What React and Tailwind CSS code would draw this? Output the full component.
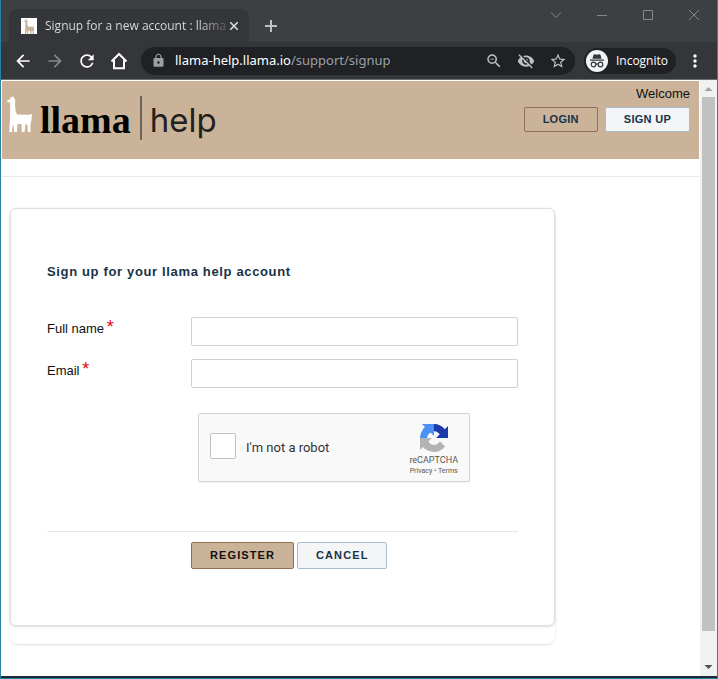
import { useState } from 'react'
import {
    MdArrowBack,
    MdArrowForward,
    MdLock,
    MdMoreVert,
    MdRefresh,
    MdStarBorder,
    MdVisibilityOff,
    MdZoomOut,
} from 'react-icons/md'

const LLAMA_PATH =
    'M3.500 0.500 L5 1.500 L6 0 L7 2 L8.200 4 L8 9 L8.600 15 L10 18.500 L22 18.800 L25 18 L24.500 24 L23.500 28 L23.500 36 L20.700 36 L20.500 29 L18.500 28 L17.500 36 L14.800 36 L14.500 28 L10.500 28 L9.800 36 L7.300 36 L6.500 29.500 L5.500 29.500 L5 36 L2.300 36 L3 24 L3.300 6.500 L0.500 6 L0 4.800 L3.500 3 Z'

const Llama = ({ className }) => (
    <svg viewBox="0 0 25 36" className={className} fill="currentColor" aria-hidden="true">
        <path d={LLAMA_PATH} />
    </svg>
)

const HomeIcon = () => (
    <svg viewBox="0 0 20 20" className="size-5" fill="none" stroke="currentColor" strokeWidth="2" aria-hidden="true">
        <path d="M2.500 10.500 10 3l7.500 7.500M5 9v8.200h10V9" />
    </svg>
)

const IncognitoIcon = () => (
    <svg viewBox="0 0 22 22" className="size-[22px] rounded-full bg-[#f1f3f4] text-[#35363a]" aria-hidden="true">
        <path fill="currentColor" d="M7.500 5c.2-.7.700-1 1.400-.8l2.100.5 2.100-.5c.7-.2 1.200.1 1.400.8l1.100 3.700H6.400zM4 9.500h14v1.200H4z" />
        <g fill="none" stroke="currentColor" strokeWidth="1.200">
            <circle cx="7.500" cy="14.500" r="2.300" />
            <circle cx="14.500" cy="14.500" r="2.300" />
            <path d="M9.800 14.200q1.200-.8 2.400 0" />
        </g>
    </svg>
)

const RecaptchaLogo = () => (
    <svg viewBox="0 0 64 64" className="size-7" aria-hidden="true">
        <path fill="#1c3aa9" d="M64 31.955l-.033-1.37V4.687l-7.16 7.16C50.948 4.674 42.033.093 32.05.093c-10.4 0-19.622 4.96-25.458 12.64l11.736 11.86a15.55 15.55 0 0 1 4.754-5.334c2.05-1.6 4.952-2.906 8.968-2.906.485 0 .86.057 1.135.163 4.976.393 9.288 3.14 11.828 7.124l-8.307 8.307L64 31.953" />
        <path fill="#4a90f5" d="M31.862.094l-1.37.033H4.594l7.16 7.16C4.58 13.147 0 22.06 0 32.046c0 10.4 4.96 19.622 12.64 25.458L24.5 45.768a15.55 15.55 0 0 1-5.334-4.754c-1.6-2.05-2.906-4.952-2.906-8.968 0-.485.057-.86.163-1.135.393-4.976 3.14-9.288 7.124-11.828l8.307 8.307L31.86.095" />
        <path fill="#b3b3b3" d="M.001 32.045l.033 1.37v25.898l7.16-7.16c5.86 7.173 14.774 11.754 24.76 11.754 10.4 0 19.622-4.96 25.458-12.64l-11.736-11.86a15.55 15.55 0 0 1-4.754 5.334c-2.05 1.6-4.952 2.906-8.968 2.906-.485 0-.86-.057-1.135-.163-4.976-.393-9.288-3.14-11.828-7.124l8.307-8.307c-10.522.04-22.4.066-27.295-.005" />
    </svg>
)

const WindowButton = ({ label, d }) => (
    <button type="button" aria-label={label} className="flex h-[30px] w-[46px] items-center justify-center">
        <svg viewBox="0 0 12 12" className="size-3" fill="none" stroke="#85888b">
            <path d={d} />
        </svg>
    </button>
)

const TabStrip = () => (
    <div className="flex h-[42px] items-start bg-[#3c4043]">
        <div className="mt-[9px] ml-2 flex h-[33px] w-[240px] items-center rounded-t-lg bg-[#35363a] pr-2 pl-3">
            <span className="flex size-4 shrink-0 items-end justify-center bg-white">
                <Llama className="h-[15px] text-[#cbb39a]" />
            </span>
            <span className="ml-2 flex-1 bg-linear-to-r from-[#dfe1e5] from-85% to-[#55565a] bg-clip-text font-[Open_Sans,sans-serif] text-xs whitespace-nowrap text-transparent">
                Signup for a new account : llama
            </span>
            <button type="button" aria-label="Close tab" className="flex size-4 items-center justify-center">
                <svg viewBox="0 0 8 8" className="size-2" stroke="#dfe1e5" strokeWidth="1.500">
                    <path d="M0 0l8 8M8 0L0 8" />
                </svg>
            </button>
        </div>
        <button type="button" aria-label="New tab" className="mt-[10px] ml-[6px] flex size-8 items-center justify-center">
            <svg viewBox="0 0 12 12" className="size-3" stroke="#bdc1c6" strokeWidth="2">
                <path d="M6 0v12M0 6h12" />
            </svg>
        </button>
        <div className="ml-auto flex">
            <WindowButton label="Search tabs" d="M1 3.500l5 5 5-5" />
            <WindowButton label="Minimize" d="M1 6.500h10" />
            <WindowButton label="Maximize" d="M1.500 1.500h9v9h-9z" />
            <WindowButton label="Close" d="M1 1l10 10M11 1L1 11" />
        </div>
    </div>
)

const Toolbar = () => (
    <div className="flex h-[38px] items-center border-b border-[#6b6c6f] bg-[#35363a] px-3 text-white">
        <div className="flex gap-3">
            <button type="button" aria-label="Back"><MdArrowBack className="size-5" /></button>
            <button type="button" aria-label="Forward" className="text-[#85878a]"><MdArrowForward className="size-5" /></button>
            <button type="button" aria-label="Reload"><MdRefresh className="size-5" /></button>
            <button type="button" aria-label="Home"><HomeIcon /></button>
        </div>
        <div className="ml-3 flex h-7 flex-1 items-center rounded-full bg-[#202124] pr-2 pl-[10px]">
            <MdLock className="size-[15px] text-[#9aa0a6]" />
            <span className="ml-[9px] flex-1 text-[13px] text-[#9aa0a6]">
                <span className="text-white">llama-help.llama.io</span>/support/signup
            </span>
            <div className="flex gap-[14px] text-[#bdc1c6]">
                <button type="button" aria-label="Zoom"><MdZoomOut className="size-[18px]" /></button>
                <button type="button" aria-label="Cookies blocked"><MdVisibilityOff className="size-[18px]" /></button>
                <button type="button" aria-label="Bookmark"><MdStarBorder className="size-[18px]" /></button>
            </div>
        </div>
        <button type="button" className="ml-[9px] flex h-[26px] items-center gap-2 rounded-full bg-[#202124] pr-2 pl-[2px] font-[Open_Sans,sans-serif] text-xs">
            <IncognitoIcon />
            Incognito
        </button>
        <button type="button" aria-label="Menu" className="ml-[9px]"><MdMoreVert className="size-5" /></button>
    </div>
)

const SiteHeader = () => (
    <header className="flex h-[78px] justify-between bg-[#cbb39a] pr-[9px] pl-[5px]">
        <a href="#home" className="flex items-start pt-[15px]">
            <Llama className="h-9 text-white" />
            <span className="ml-2 font-[Liberation_Serif,serif] text-[38px] leading-[48px] font-bold text-black">llama</span>
            <span className="ml-[9px] h-11 w-[2px] bg-[#6f6259]" />
            <span className="ml-2 font-[Inter,sans-serif] text-[33px] leading-[48px] text-[#231f20]">help</span>
        </a>
        <div className="flex flex-col items-end pt-1">
            <span className="text-[13px] leading-[18px] text-[#111]">Welcome</span>
            <div className="mt-1 flex gap-[7px]">
                <button type="button" className="h-[25px] rounded-xs border border-[#8f7150] px-[18px] text-[11px] font-bold tracking-wide text-[#183247]">
                    LOGIN
                </button>
                <button type="button" className="h-[25px] rounded-xs border border-[#a9bccd] bg-[#f3f5f7] px-[18px] text-[11px] font-bold tracking-wide text-[#183247]">
                    SIGN UP
                </button>
            </div>
        </div>
    </header>
)

const Field = ({ id, label, type, value, onChange }) => (
    <div className="flex items-start">
        <label htmlFor={id} className="w-36 shrink-0 pt-[2px] text-[13px] leading-4 text-[#111]">
            {label} <span className="-ml-px text-lg leading-4 text-red-600">*</span>
        </label>
        <input
            id={id}
            name={id}
            type={type}
            value={value}
            onChange={onChange}
            className="h-[29px] min-w-0 flex-1 rounded-xs border border-[#cfd2d4] bg-white px-2 text-[13px] outline-none"
        />
    </div>
)

const Recaptcha = () => (
    <div className="mt-[25px] ml-[151px] flex h-[69px] w-[272px] items-center rounded-xs border border-[#d3d3d3] bg-[#f9f9f9] pr-[11px] pl-[11px] font-[Roboto,sans-serif] shadow-xs">
        <input id="robot" type="checkbox" className="mb-1 size-[26px] appearance-none rounded-xs border border-[#c1c1c1] bg-white" />
        <label htmlFor="robot" className="ml-[10px] flex-1 text-[13px] text-[#333]">I'm not a robot</label>
        <div className="flex flex-col items-center pt-1 text-[#555]">
            <RecaptchaLogo />
            <span className="mt-[2px] text-[9px] leading-3">reCAPTCHA</span>
            <span className="text-[7px] leading-[10px]">
                <a href="#privacy">Privacy</a> • <a href="#terms">Terms</a>
            </span>
        </div>
    </div>
)

const SignupForm = () => {
    const [form, setForm] = useState({ fullName: '', email: '' })

    const onChange = (e) => setForm({ ...form, [e.target.name]: e.target.value })
    const onSubmit = (e) => e.preventDefault()

    return (
        <form onSubmit={onSubmit} className="rounded-md border border-[#dcdfe1] bg-white px-9 pt-[54px] pb-14 shadow-sm">
            <h1 className="text-[13px] leading-[18px] font-bold tracking-wider text-[#183247]">Sign up for your llama help account</h1>
            <div className="mt-9 flex flex-col gap-[13px]">
                <Field id="fullName" label="Full name" type="text" value={form.fullName} onChange={onChange} />
                <Field id="email" label="Email" type="email" value={form.email} onChange={onChange} />
            </div>
            <Recaptcha />
            <div className="mt-[49px] flex gap-[3px] border-t border-[#e5e7e8] pt-[10px] pl-36">
                <button type="submit" className="h-[27px] rounded-xs border border-[#8f7150] bg-[#cbb39a] px-[18px] text-[11px] font-bold tracking-widest text-[#111]">
                    REGISTER
                </button>
                <button type="button" className="h-[27px] rounded-xs border border-[#a9bccd] bg-[#f3f5f7] px-[18px] text-[11px] font-bold tracking-widest text-[#183247]">
                    CANCEL
                </button>
            </div>
        </form>
    )
}

const Scrollbar = () => (
    <div className="flex w-[17px] shrink-0 flex-col items-center bg-[#f1f1f1]" aria-hidden="true">
        <svg viewBox="0 0 17 17" className="size-[17px] shrink-0" fill="#a3a3a3">
            <path d="M4.500 11l4-4 4 4z" />
        </svg>
        <div className="flex w-full flex-1 flex-col items-center">
            <div className="w-[13px] flex-[95] bg-[#c1c1c1]" />
            <div className="flex-[5]" />
        </div>
        <svg viewBox="0 0 17 17" className="size-[17px] shrink-0" fill="#505050">
            <path d="M4.500 6l4 4 4-4z" />
        </svg>
    </div>
)

const App = () => (
    <div className="flex min-h-screen flex-col border-x border-b border-[#2a81a8] bg-white font-[Liberation_Sans,Arial,sans-serif]">
        <div className="font-[Noto_Sans,sans-serif]">
            <TabStrip />
            <Toolbar />
        </div>
        <div className="flex flex-1 border-b-2 border-b-[#1b2a33]">
            <div className="flex-1 px-px pt-px">
                <SiteHeader />
                <div className="h-[18px] border-b border-[#e8e9ea]" />
                <main className="px-2 pt-[31px]">
                    <div className="w-4/5 rounded-lg pb-[18px] shadow-sm">
                        <SignupForm />
                    </div>
                </main>
            </div>
            <Scrollbar />
        </div>
    </div>
)

export default App
